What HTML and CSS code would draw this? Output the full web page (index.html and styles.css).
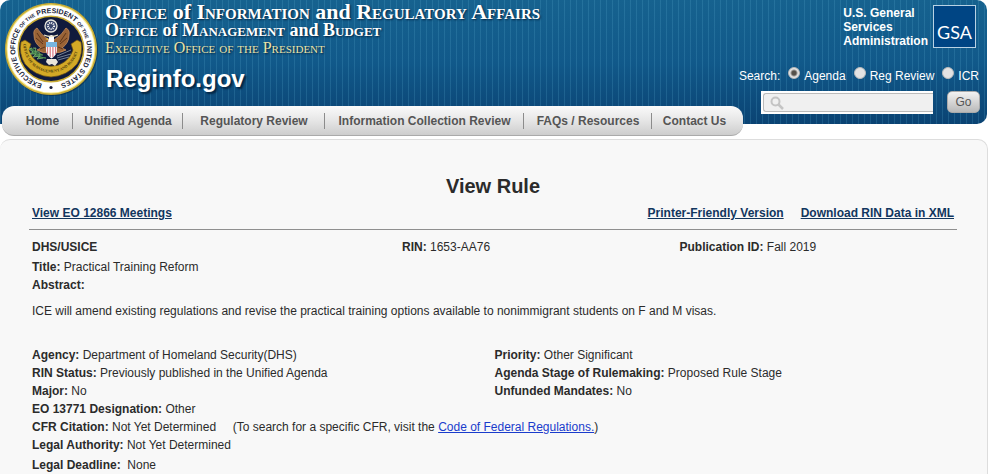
FILE: index.html
```html
<!DOCTYPE html>
<html lang="en">
<head>
<meta charset="utf-8">
<title>View Rule</title>
<link rel="stylesheet" href="styles.css">
</head>
<body>
<header class="banner">
  <svg class="seal" viewBox="0 0 94 94" role="img" aria-label="Seal">
    <defs>
      <path id="ringAll" d="M47 83 A36 36 0 1 1 47.1 83"/>
      <path id="ribbonArc" d="M19.500 38 A27.700 29 0 1 0 74.500 38"/>
    </defs>
    <circle cx="48" cy="48" r="46" fill="#082b49" opacity=".6"/>
    <circle cx="47" cy="47" r="46" fill="#c9ac35"/>
    <circle cx="47" cy="47" r="44.5" fill="#f5e98d"/>
    <circle cx="47" cy="47" r="43.5" fill="#fff"/>
    <circle cx="47" cy="47" r="33.5" fill="#c9ac35"/>
    <circle cx="47" cy="47" r="32" fill="#101a3c"/>
    <text class="ring"><textPath href="#ringAll" startOffset="9">EXECUTIVE OFFICE <tspan class="tiny">OF THE</tspan> PRESIDENT <tspan class="tiny">OF THE</tspan> UNITED STATES</textPath></text>
    <circle cx="47" cy="85.500" r="1.6" fill="#171c38"/>
    <path d="M17 40 L21 38 L27 42 L25 48 A23 23 0 0 0 69 48 L67 42 L73 38 L77 40 A30.500 30.500 0 0 1 73 62 Q63 74 47 75 Q31 74 21 62 A30.500 30.500 0 0 1 17 40Z" fill="#d3a926" stroke="#6e5312" stroke-width=".7"/>
    <path d="M45 38 Q37 33 33 26 Q29 28 30 33 Q30 41 37 46 L33 48 Q39 52 46 50 L48 50 Q56 52 62 48 L58 46 Q65 41 65 33 Q66 28 62 26 Q58 33 50 38Z" fill="#9a6336" stroke="#c98d58" stroke-width=".8"/>
    <path d="M33 31l6 9M32 36l7 6M62 31l-6 9M63 36l-7 6M36 47l5-2M59 47l-5-2" stroke="#5d351b" stroke-width="1" fill="none"/>
    <path d="M45 35 Q47 31 50 35 L50 40 H44Z" fill="#fff"/>
    <path d="M44 36l-3 1 3 1z" fill="#e9c23c"/>
    <path d="M42 40H53V49Q52 54 47.500 56.500Q43 54 42 49Z" fill="#fff"/>
    <path d="M43.500 43v9M46.200 43v12M48.900 43v12M51.600 43v9" stroke="#dc7f88" stroke-width="1.300"/>
    <path d="M42 40H53V45H42Z" fill="#78b6e0"/>
    <circle cx="47" cy="24" r="6" fill="#39476d" stroke="#e8e7de" stroke-width="1.300"/>
    <circle cx="47" cy="24" r="3" fill="none" stroke="#fff" stroke-width="2" stroke-dasharray="1 1"/>
    <path d="M40 33q7 3 14 0" stroke="#eee5c7" stroke-width="1.300" fill="none"/>
    <path d="M27 46 Q31 56 42 56" fill="none" stroke="#4a8b4d" stroke-width="1.500"/>
    <path d="M28 46l-3 1 4 3-3 2 6 0-3 3 7-1-3 3 6-1M29 46l3 0-1 4 4 0 0 3 4 0" fill="#3e7d49" stroke="#77ae69" stroke-width=".8"/>
    <path d="M53 54l14-6M53 56l14-4M54 58l11-3" stroke="#8d9cab" stroke-width=".8"/>
    <path d="M43 57l-1 3 3 3 3-1 3 2 3-4-2-3z" fill="#e9e5da"/>
    <text class="ribbon"><textPath href="#ribbonArc" startOffset="4">OFFICE OF MANAGEMENT AND BUDGET</textPath></text>
  </svg>
  <div class="names">
    <p class="office office-main"><span class="caps">Office</span> of <span class="caps">Information</span> and <span class="caps">Regulatory Affairs</span></p>
    <p class="office office-parent"><span class="caps">Office</span> of <span class="caps">Management</span> and <span class="caps">Budget</span></p>
    <p class="office office-top"><span class="caps">Executive Office of the President</span></p>
    <p class="site">Reginfo.gov</p>
  </div>
  <div class="tools">
    <div class="gsa">
      <p class="gsa-name">U.S. General<br>Services<br>Administration</p>
      <span class="gsa-logo">GSA</span>
    </div>
    <form class="search">
      <div class="scope">
        <span>Search:</span>
        <label><input type="radio" name="scope" checked>Agenda</label>
        <label><input type="radio" name="scope">Reg Review</label>
        <label><input type="radio" name="scope">ICR</label>
      </div>
      <div class="query">
        <div class="field">
          <svg class="lens" viewBox="0 0 14 14" aria-hidden="true"><circle cx="5.500" cy="5.500" r="4" fill="none" stroke="#c4c4c4" stroke-width="2"/><path d="M8.500 8.500L13 13" stroke="#c4c4c4" stroke-width="2.500"/></svg>
          <input type="text" aria-label="Search">
        </div>
        <button type="button">Go</button>
      </div>
    </form>
  </div>
</header>
<nav class="menu">
  <a href="#">Home</a>
  <a href="#">Unified Agenda</a>
  <a href="#">Regulatory Review</a>
  <a href="#">Information Collection Review</a>
  <a href="#">FAQs / Resources</a>
  <a href="#">Contact Us</a>
</nav>
<main class="panel">
  <h1>View Rule</h1>
  <div class="links">
    <a href="#">View EO 12866 Meetings</a>
    <a href="#" class="push">Printer-Friendly Version</a>
    <a href="#">Download RIN Data in XML</a>
  </div>
  <hr>
  <section class="rule">
    <div class="ids">
      <p><b>DHS/USICE</b></p>
      <p><b>RIN:</b> 1653-AA76</p>
      <p><b>Publication ID:</b> Fall 2019</p>
    </div>
    <p><b>Title:</b> Practical Training Reform</p>
    <p><b>Abstract:</b></p>
    <p class="abstract">ICE will amend existing regulations and revise the practical training options available to nonimmigrant students on F and M visas.</p>
    <div class="facts">
      <p><b>Agency:</b> Department of Homeland Security(DHS)</p>
      <p><b>Priority:</b> Other Significant</p>
      <p><b>RIN Status:</b> Previously published in the Unified Agenda</p>
      <p><b>Agenda Stage of Rulemaking:</b> Proposed Rule Stage</p>
      <p><b>Major:</b> No</p>
      <p><b>Unfunded Mandates:</b> No</p>
    </div>
    <p><b>EO 13771 Designation:</b> Other</p>
    <p><b>CFR Citation:</b> Not Yet Determined &nbsp; &nbsp; (To search for a specific CFR, visit the <a class="cfr" href="#">Code of Federal Regulations.</a>)</p>
    <p><b>Legal Authority:</b> Not Yet Determined</p>
    <p class="deadline"><b>Legal Deadline:</b>&nbsp; None</p>
  </section>
</main>
</body>
</html>
```
FILE: styles.css
```css
* { box-sizing: border-box; }
body {
  margin: 0;
  padding-right: 1px;
  background: #fff;
  color: #2b2b2b;
  font: 12px/18px "Liberation Sans", Arial, sans-serif;
}
p, h1 { margin: 0; }

.banner {
  display: flex;
  align-items: flex-start;
  height: 124px;
  margin-right: 1px;
  padding: 2px 7px 0 4px;
  border-radius: 10px 10px 10px 0;
  background:
    repeating-linear-gradient(90deg, rgba(90, 170, 205, .22) 0 1px, transparent 1px 6px),
    linear-gradient(#16628f, #11598a 50%, #0a4373);
  color: #fff;
}
.seal { width: 94px; height: 94px; flex: none; }
.ring { font: bold 7px "Liberation Sans", Arial, sans-serif; fill: #171c38; }
.tiny { font-size: 5px; }
.ribbon { font: bold 4px "Liberation Serif", serif; fill: #4e390b; }

.names { margin-left: 7px; }
.office {
  font-family: "Liberation Serif", "Times New Roman", serif;
  font-weight: bold;
  text-shadow: 1px 1px 2px #04233f;
  white-space: nowrap;
}
.caps { font-variant: small-caps; }
.office-main { font-size: 22px; line-height: 20px; }
.office-parent { font-size: 18px; line-height: 17px; }
.office-top { font-size: 16px; line-height: 17px; font-weight: normal; color: #e9e3a8; }
.site {
  margin: 8px 0 0 1px;
  font-size: 24px;
  font-weight: bold;
  line-height: 30px;
  text-shadow: 2px 2px 2px #04233f;
}

.tools { margin-left: auto; }
.gsa { display: flex; justify-content: flex-end; gap: 5px; padding: 3px 4px 0 0; }
.gsa-name { padding-top: 1px; font-weight: bold; line-height: 14px; }
.gsa-logo {
  display: flex;
  align-items: flex-end;
  justify-content: center;
  width: 43px;
  height: 43px;
  padding-bottom: 5px;
  border: 1px solid #b9d2e4;
  background: #004584;
  font: 18px/20px Lato, sans-serif;
}
.scope {
  display: flex;
  justify-content: flex-end;
  gap: 8px;
  height: 18px;
  margin-top: 19px;
  padding-right: 1px;
}
.scope label { display: flex; gap: 4px; }
.scope input {
  appearance: none;
  width: 12px;
  height: 12px;
  margin: 0;
  border: 1px solid #bbb;
  border-radius: 50%;
  background: #e3e3e3;
}
.scope input:checked { background: radial-gradient(circle, #55514b 0 2px, #e3e3e3 4px); }
.query { display: flex; justify-content: flex-end; gap: 14px; margin-top: 6px; }
.field {
  display: flex;
  align-items: center;
  width: 172px;
  height: 23px;
  padding: 2px 0 2px 2px;
  background: #fff;
}
.lens { position: absolute; width: 14px; height: 14px; margin-left: 7px; }
.field input {
  width: 100%;
  height: 19px;
  padding: 0 4px 0 26px;
  border: 1px solid #bbb;
  border-right: 0;
  border-radius: 3px 0 0 3px;
  background: #f0f0f0;
  font: inherit;
}
.query button {
  width: 33px;
  height: 22px;
  padding: 0;
  border: 1px solid #aaa;
  border-radius: 5px;
  background: linear-gradient(#f2f2f2, #b9b9b9);
  color: #555;
  font: 12px/18px "Liberation Sans", Arial, sans-serif;
}

.menu {
  position: relative;
  display: grid;
  grid-template-columns: 61px 110px 142px 199px 128px 84px;
  align-items: center;
  width: fit-content;
  height: 30px;
  margin: -18px 0 0 2px;
  padding: 0 7px 0 10px;
  border-bottom: 1px solid #aaa;
  border-radius: 12px;
  background: linear-gradient(#fafafa, #e6e6e6 50%, #cdcdcd);
}
.menu a {
  padding: 1px 0 0 1px;
  border-right: 1px solid #8c8c8c;
  color: #555;
  font-weight: bold;
  line-height: 15px;
  text-align: center;
  text-decoration: none;
}
.menu a:last-child { border-right: 0; }

.panel {
  min-height: calc(100vh - 139px);
  margin-top: 3px;
  padding: 34px 30px 0 29px;
  border: 1px solid #ddd;
  border-width: 1px 1px 0 0;
  border-radius: 10px 10px 0 0;
  background: #f8f8f8;
}
h1 { font-size: 20px; line-height: 24px; text-align: center; }
.links { display: flex; gap: 17px; margin-top: 6px; padding: 0 3px; }
.links a { color: #12365e; font-weight: bold; }
.push { margin-left: auto; }
hr { margin: 7px 0 0; border: 0; border-top: 1px solid #8f8f8f; }
.rule { padding: 8px 0 0 3px; }
.ids { display: grid; grid-template-columns: 4fr 3fr 3fr; margin-bottom: 2px; }
.abstract { margin: 8px 0 26px; }
.facts { display: grid; grid-template-columns: 1fr 1fr; }
.cfr { color: #1a3ccc; }
.deadline { margin-top: 2px; }
```
